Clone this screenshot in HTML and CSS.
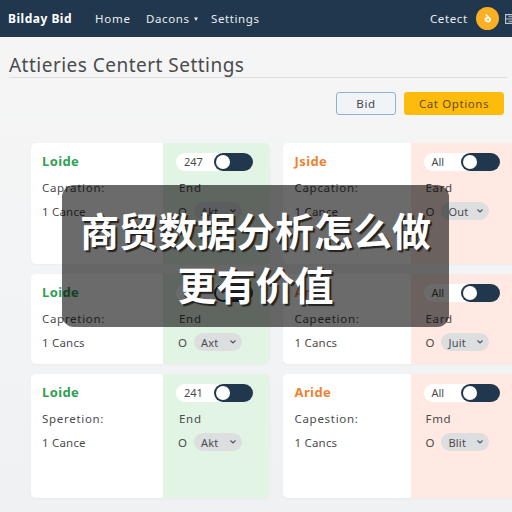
FILE: index.html
```html
<!DOCTYPE html>
<html lang="zh">
<head>
<meta charset="utf-8">
<title>Settings</title>
<link rel="stylesheet" href="styles.css">
</head>
<body>
<header class="nav">
  <strong class="brand">Bilday Bid</strong>
  <nav class="links">
    <span class="home">Home</span>
    <span class="menu">Dacons <svg class="caret" viewBox="0 0 4 4"><path d="M0 .5h4L2 4z" fill="currentColor"/></svg></span>
    <span class="set">Settings</span>
  </nav>
  <span class="account">Cetect</span>
  <svg class="avatar" viewBox="0 0 23 23"><circle cx="11.5" cy="11.5" r="11.5" fill="#fbaf22"/><path d="M9.700 7.500l4.300 4.300M9.500 11.500c2-1.500 5.500-.3 4.500 1.800s-4.800 1.500-4.500-1.800z" fill="none" stroke="#fff" stroke-width="1.700"/></svg>
  <svg class="grid-icon" viewBox="0 0 10 10"><path d="M8 .6H.6v8.800H8M.6 5H10M3.500 2.700H10M3.500 7.300H10" fill="none" stroke="#b9c8d6" stroke-width="1.100"/></svg>
</header>
<main>
  <h1>Attieries Centert Settings</h1>
  <div class="actions">
    <button class="btn bid">Bid</button>
    <button class="btn options">Cat Options</button>
  </div>
  <div class="cards">
    <section class="card green">
      <div class="info"><h2>Loide</h2><p class="cap">Capration:</p><p class="count">1 Cance</p></div>
      <div class="side"><div class="toggle"><span class="num">247</span><i class="switch"></i></div><p class="end">End</p><div class="pick"><span>O</span><span class="select">Akt<svg viewBox="0 0 6 4"><path d="M.5.5L3 3 5.500.5"/></svg></span></div></div>
    </section>
    <section class="card orange">
      <div class="info"><h2>Jside</h2><p class="cap">Capcation:</p><p class="count">1 Cance</p></div>
      <div class="side"><div class="toggle"><span class="num">All</span><i class="switch"></i></div><p class="end">Eard</p><div class="pick"><span>O</span><span class="select">Out<svg viewBox="0 0 6 4"><path d="M.5.5L3 3 5.500.5"/></svg></span></div></div>
    </section>
    <section class="card green">
      <div class="info"><h2>Loide</h2><p class="cap">Capretion:</p><p class="count">1 Cancs</p></div>
      <div class="side"><div class="toggle"><span class="num">241</span><i class="switch"></i></div><p class="end">End</p><div class="pick"><span>O</span><span class="select">Axt<svg viewBox="0 0 6 4"><path d="M.5.5L3 3 5.500.5"/></svg></span></div></div>
    </section>
    <section class="card orange">
      <div class="info"><h2>Aride</h2><p class="cap">Capeetion:</p><p class="count">1 Cancs</p></div>
      <div class="side"><div class="toggle"><span class="num">All</span><i class="switch"></i></div><p class="end">Eard</p><div class="pick"><span>O</span><span class="select">Juit<svg viewBox="0 0 6 4"><path d="M.5.5L3 3 5.500.5"/></svg></span></div></div>
    </section>
    <section class="card green">
      <div class="info"><h2>Loide</h2><p class="cap">Speretion:</p><p class="count">1 Cance</p></div>
      <div class="side"><div class="toggle"><span class="num">241</span><i class="switch"></i></div><p class="end">End</p><div class="pick"><span>O</span><span class="select">Akt<svg viewBox="0 0 6 4"><path d="M.5.5L3 3 5.500.5"/></svg></span></div></div>
    </section>
    <section class="card orange">
      <div class="info"><h2>Aride</h2><p class="cap">Capestion:</p><p class="count">1 Cancs</p></div>
      <div class="side"><div class="toggle"><span class="num">All</span><i class="switch"></i></div><p class="end">Fmd</p><div class="pick"><span>O</span><span class="select">Blit<svg viewBox="0 0 6 4"><path d="M.5.5L3 3 5.500.5"/></svg></span></div></div>
    </section>
  </div>
</main>
<div class="caption">商贸数据分析怎么做<br>更有价值</div>
</body>
</html>
```
FILE: styles.css
```css
* { box-sizing: border-box; }
body {
  margin: 0;
  width: 512px;
  height: 512px;
  overflow: hidden;
  background: linear-gradient(#f5f5f5, #f3f4f5 50%, #eff1f3);
  color: #4b4b4e;
  font-family: "Noto Sans", "Open Sans", sans-serif;
  font-size: 11.500px;
  position: relative;
}
h1, h2, p { margin: 0; font-weight: 400; }
.nav {
  height: 37px;
  background: #21374e;
  color: #e9edf1;
  display: flex;
  align-items: center;
  padding-left: 8px;
  white-space: nowrap;
  overflow: hidden;
}
.brand { width: 87px; font-size: 12px; letter-spacing: .5px; color: #fff; }
.links { display: flex; flex: 1; }
.home { width: 51px; letter-spacing: .75px; }
.menu { width: 65px; letter-spacing: .6px; }
.set { letter-spacing: .6px; }
.caret { width: 4px; height: 4px; margin-left: 1px; vertical-align: 2px; }
.account { width: 46px; letter-spacing: .6px; }
.avatar { width: 23px; height: 23px; margin-right: 6px; flex: none; }
.grid-icon { width: 10px; height: 10px; flex: none; margin-right: -3px; }
h1 {
  margin: 0 5px 0 9px;
  height: 41px;
  line-height: 57px;
  font-size: 19px;
  letter-spacing: .48px;
  border-bottom: 1px solid #dcdddf;
  white-space: nowrap;
}
.actions { display: flex; justify-content: flex-end; gap: 8px; padding: 14px 8px 0 0; }
.btn { height: 23px; padding: 0; border: 1px solid #8eb2d1; border-radius: 3px; font: 11.500px "Noto Sans", sans-serif; letter-spacing: .6px; color: #454548; background: #f1f4f7; }
.bid { width: 60px; }
.options { width: 100px; border-color: #fdbb0b; background: #fdbb0b; color: #684d1b; }
.cards {
  display: grid;
  grid-template-columns: 239px 239px;
  grid-template-rows: 121px 90px 124px;
  gap: 10px 13px;
  padding: 28px 0 0 30.500px;
}
.card { display: flex; background: #fff; border-radius: 5px; overflow: hidden; box-shadow: 0 1px 3px #00000008; }
.info { width: 132.500px; padding: 7px 0 0 11.500px; }
.orange .info { width: 128px; padding-left: 12px; }
.side { flex: 1; background: #e2f4e3; padding: 10px 0 0 13px; }
.orange .side { background: #ffe9e2; }
h2 { font-size: 13px; font-weight: 700; line-height: 23px; height: 26px; letter-spacing: .4px; color: #2fa052; }
.orange h2 { color: #ed8332; }
.cap, .count, .end { line-height: 24px; height: 24px; white-space: nowrap; }
.cap { letter-spacing: .7px; }
.count { letter-spacing: .2px; }
.toggle { display: flex; width: 77px; height: 18px; border-radius: 9px; background: #fff; margin-bottom: 5px; }
.num { width: 38px; padding-left: 8px; font-size: 11px; line-height: 18px; }
.switch { width: 39px; height: 18px; border-radius: 9px; background: #21374e; padding: 2px; }
.switch::before { content: ""; display: block; width: 14px; height: 14px; border-radius: 7px; background: #fff; }
.end { padding-left: 3px; letter-spacing: .7px; }
.orange .end { padding-left: 2px; }
.orange .toggle { width: 76px; }
.pick { display: flex; align-items: center; gap: 7px; padding-left: 2px; height: 22px; }
.select { width: 48px; height: 18px; border-radius: 9px; background: #dcdee0; display: flex; align-items: center; justify-content: space-between; padding: 0 6px 0 7px; font-size: 11px; letter-spacing: .2px; }
.select svg { width: 6px; height: 4px; }
.select path { fill: none; stroke: #55555a; stroke-width: 1.200; }
.caption {
  position: absolute;
  left: 62px;
  top: 185px;
  width: 387px;
  height: 142px;
  border-radius: 12px;
  background: rgba(0, 0, 0, .58);
  color: #fff;
  font: 700 39px/54px "Noto Sans CJK SC", sans-serif;
  text-align: center;
  padding-top: 17px;
  text-shadow: 2px 2px 1px #222;
}
```
